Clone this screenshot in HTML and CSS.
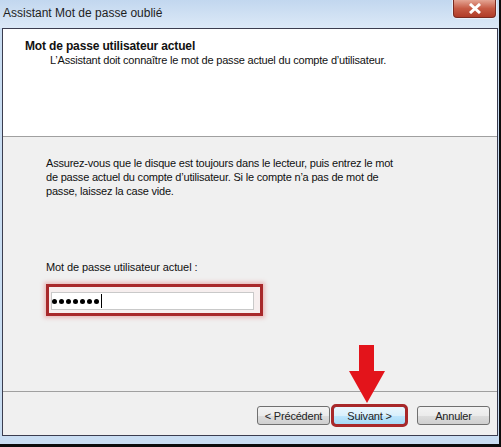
FILE: index.html
```html
<!DOCTYPE html>
<html lang="fr">
<head>
  <meta charset="UTF-8">
  <title>Assistant Mot de passe oublié</title>
  <link rel="stylesheet" href="styles.css">
</head>
<body>

  <div class="frame">
    <div class="titlebar">
      <span class="title">Assistant Mot de passe oublié</span>
      <div class="close">
        <svg width="14" height="11" viewBox="0 0 14 11">
          <path d="M2 1 L12 10 M12 1 L2 10" stroke="#fff" stroke-width="3"/>
        </svg>
      </div>
    </div>

    <div class="client">
      <div class="header">
        <h1>Mot de passe utilisateur actuel</h1>
        <p>L’Assistant doit connaître le mot de passe actuel du compte d’utilisateur.</p>
      </div>

      <div class="content">
        <p class="intro">Assurez-vous que le disque est toujours dans le lecteur, puis entrez le mot de passe actuel du compte d’utilisateur. Si le compte n’a pas de mot de passe, laissez la case vide.</p>

        <label class="label" for="pwd">Mot de passe utilisateur actuel :</label>
        <div class="mark">
          <div class="field" id="pwd">
            <i class="dot"></i><i class="dot"></i><i class="dot"></i><i class="dot"></i><i class="dot"></i><i class="dot"></i><i class="dot"></i><span class="caret"></span>
          </div>
        </div>
      </div>

      <div class="footer">
        <button class="btn">&lt; Précédent</button>
        <button class="btn next">Suivant &gt;</button>
        <button class="btn cancel">Annuler</button>

        <svg class="arrow" width="36" height="58" viewBox="0 0 36 58">
          <path d="M10 0 H25 V26 H36 L18 58 L0 26 H10 Z" fill="#e3141b"/>
        </svg>
      </div>
    </div>
  </div>

</body>
</html>
```

FILE: styles.css
```css
body { margin: 0; font-family: "Liberation Sans", Arial, sans-serif; font-size: 11px; color: #111; }
.frame { width: 501px; height: 447px; box-sizing: border-box; background: #c9ddf2; border-right: 2px solid #0d0d0d; border-bottom: 3px solid #0d0d0d; padding: 0 1px 0 2px; position: relative; }
.titlebar { height: 28px; display: flex; align-items: flex-start; justify-content: space-between; background: linear-gradient(#c2d7ef, #dce9f7); margin: 0 -1px 0 -2px; padding-left: 3px; }
.title { font-size: 12px; margin-top: 6px; color: #1e1e1e; }
.close { width: 43px; height: 18px; box-sizing: border-box; display: flex; align-items: center; justify-content: center; background: linear-gradient(#e4a493, #c65a44 50%, #b03c28); border: 1px solid #7a2a20; border-top: none; border-radius: 0 0 4px 4px; box-shadow: 0 0 0 1px rgba(255, 255, 255, 0.5); margin-right: 3px; }

.client { height: 408px; box-sizing: border-box; border: 1px solid #3b3d4f; background: #f0f0f0; position: relative; display: flex; flex-direction: column; }
.header { height: 108px; box-sizing: border-box; background: #fff; border-bottom: 1px solid #a0a0a0; padding: 10px 0 0 22px; }
.header h1 { margin: 0; font-size: 12px; font-weight: bold; letter-spacing: -0.15px; }
.header p { margin: 1px 0 0 25px; letter-spacing: -0.2px; }

.content { flex: 1; padding: 19px 0 0 43px; }
.intro { margin: 0; width: 352px; line-height: 14px; letter-spacing: -0.2px; }
.label { display: block; margin-top: 63px; letter-spacing: -0.1px; }
.mark { width: 217px; height: 32px; box-sizing: border-box; border: 3px solid #a8282a; box-shadow: 0 0 4px 2px rgba(220, 90, 90, 0.35); margin: 11px 0 0 0; padding: 5px 6px 3px 2px; background: #f6eeee; }
.field { height: 18px; box-sizing: border-box; background: #fff; border: 1px solid #c9c9c9; padding-left: 0; display: flex; align-items: center; gap: 2px; }
.dot { width: 5px; height: 5px; border-radius: 50%; background: #000; }
.caret { width: 1px; height: 14px; background: #000; }

.footer { height: 44px; box-sizing: border-box; border-top: 1px solid #a0a0a0; display: flex; justify-content: flex-end; align-items: flex-start; padding: 14px 7px 0 0; position: relative; }
.btn { font-family: "Liberation Sans", Arial, sans-serif; font-size: 11px; letter-spacing: -0.2px; color: #222; height: 19px; padding: 0; box-sizing: border-box; border: 1px solid #707070; border-radius: 3px; background: linear-gradient(#f3f3f3, #ebebeb 50%, #dddddd 51%, #cfcfcf); width: 73px; }
.next { margin-left: 3px; width: 73px; outline: 3px solid #a8282a; outline-offset: -1px; border-color: #3c7fb1; background: linear-gradient(#eaf6fd, #d9f0fc 50%, #bee6fd 51%, #a7d9f5); }
.cancel { margin-left: 11px; }
.arrow { position: absolute; left: 346px; top: -47px; }
```
